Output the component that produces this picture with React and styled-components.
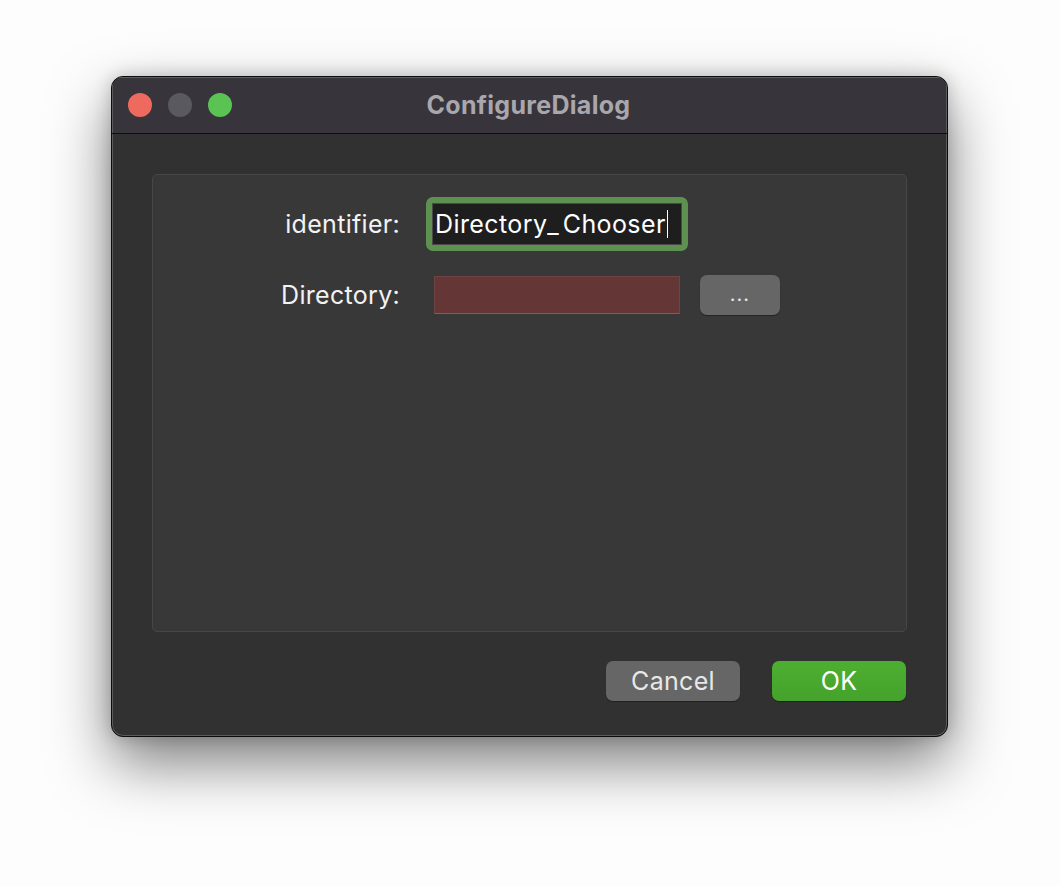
import React from "react"
import styled, { createGlobalStyle } from "styled-components"

const GlobalStyle = createGlobalStyle`
  html, body {
    margin: 0;
    padding: 0;
    background: #ffffff;
  }
  body {
    font-family: Inter, "Liberation Sans", sans-serif;
  }
`

const Page = styled.div`
  width: 1060px;
  height: 886px;
  padding: 76px 0 0 111px;
  box-sizing: border-box;
  background: #fdfdfd;
`

const Window = styled.div`
  width: 837px;
  height: 661px;
  box-sizing: border-box;
  border: 1px solid #0c0c0c;
  border-radius: 12px;
  background: #313131;
  box-shadow: inset 0 0 0 1px #5b5b5b, 0 26px 60px rgba(0, 0, 0, 0.5),
    0 0 18px rgba(0, 0, 0, 0.2);
  overflow: hidden;
  display: flex;
  flex-direction: column;
`

const TitleBar = styled.div`
  position: relative;
  height: 56px;
  flex: none;
  display: flex;
  align-items: center;
  justify-content: center;
  background: #37353b;
  border-bottom: 1px solid #0e0e0e;
  box-shadow: inset 0 1px 0 #5e5d62, inset 1px 0 0 #5b5b5b, inset -1px 0 0 #5b5b5b;
`

const Lights = styled.div`
  position: absolute;
  left: 16px;
  top: 16px;
  display: flex;
  gap: 16px;
`

const Light = styled.span`
  width: 24px;
  height: 24px;
  border-radius: 50%;
  background: ${p => p.color};
`

const Title = styled.h1`
  margin: 0 0 0 -2px;
  font-size: 25px;
  font-weight: 700;
  color: #a9a7ad;
  letter-spacing: 0.3px;
`

const Body = styled.div`
  flex: 1;
  padding: 40px 40px 0 40px;
  display: flex;
  flex-direction: column;
`

const Group = styled.div`
  height: 458px;
  box-sizing: border-box;
  border: 1px solid #474747;
  border-radius: 5px;
  background: #383838;
  padding-top: 22px;
  display: flex;
  flex-direction: column;
  gap: 24px;
`

const Row = styled.div`
  display: flex;
  align-items: center;
  height: ${p => p.h}px;
`

const Label = styled.label`
  width: 247px;
  text-align: right;
  font-size: 25px;
  letter-spacing: 0.3px;
  color: #f2f2f2;
`

const FocusRing = styled.div`
  margin-left: 26px;
  width: 262px;
  height: 54px;
  box-sizing: border-box;
  border: 6px solid #5e9150;
  border-radius: 7px;
  display: flex;
`

const TextInput = styled.div`
  flex: 1;
  background: #1e1e1e;
  border: 1px solid #4a4a4a;
  display: flex;
  align-items: center;
  padding-left: 2px;
  font-size: 25px;
  letter-spacing: 0.4px;
  color: #ffffff;
  white-space: nowrap;
`

const Underscore = styled.span`
  letter-spacing: 4px;
`

const Caret = styled.span`
  display: inline-block;
  width: 1.5px;
  height: 28px;
  margin-left: 1px;
  background: #ffffff;
`

const ErrorInput = styled.div`
  margin-left: 34px;
  width: 246px;
  height: 38px;
  box-sizing: border-box;
  background: #643636;
  border: 1px solid #6f4444;
  border-bottom-color: #8a5a5a;
`

const Button = styled.button`
  font-family: inherit;
  border: none;
  border-radius: 7px;
  height: 40px;
  width: ${p => p.w}px;
  font-size: ${p => p.fs || 25}px;
  letter-spacing: 0.3px;
  color: ${p => (p.primary ? "#ffffff" : "#e8e8e8")};
  background: ${p =>
    p.primary ? "linear-gradient(#4daf31, #45a22c)" : "#666666"};
  box-shadow: 0 1px 1px rgba(0, 0, 0, 0.35);
  padding: 0;
`

const BrowseButton = styled(Button)`
  margin-left: 20px;
  padding-bottom: 2px;
  letter-spacing: 1px;
`

const Footer = styled.div`
  display: flex;
  justify-content: flex-end;
  gap: 32px;
  padding-top: 29px;
  padding-right: 1px;
`

export default function App() {
  return (
    <>
      <GlobalStyle />
      <Page>
        <Window>
          <TitleBar>
            <Lights>
              <Light color="#ee6a5e" />
              <Light color="#5b5960" />
              <Light color="#5ac353" />
            </Lights>
            <Title>ConfigureDialog</Title>
          </TitleBar>
          <Body>
            <Group>
              <Row h={54}>
                <Label>identifier:</Label>
                <FocusRing>
                  <TextInput>
                    Directory<Underscore>_</Underscore>Chooser
                    <Caret />
                  </TextInput>
                </FocusRing>
              </Row>
              <Row h={40}>
                <Label>Directory:</Label>
                <ErrorInput />
                <BrowseButton w={80} fs={20}>...</BrowseButton>
              </Row>
            </Group>
            <Footer>
              <Button w={134}>Cancel</Button>
              <Button w={134} primary>OK</Button>
            </Footer>
          </Body>
        </Window>
      </Page>
    </>
  )
}
